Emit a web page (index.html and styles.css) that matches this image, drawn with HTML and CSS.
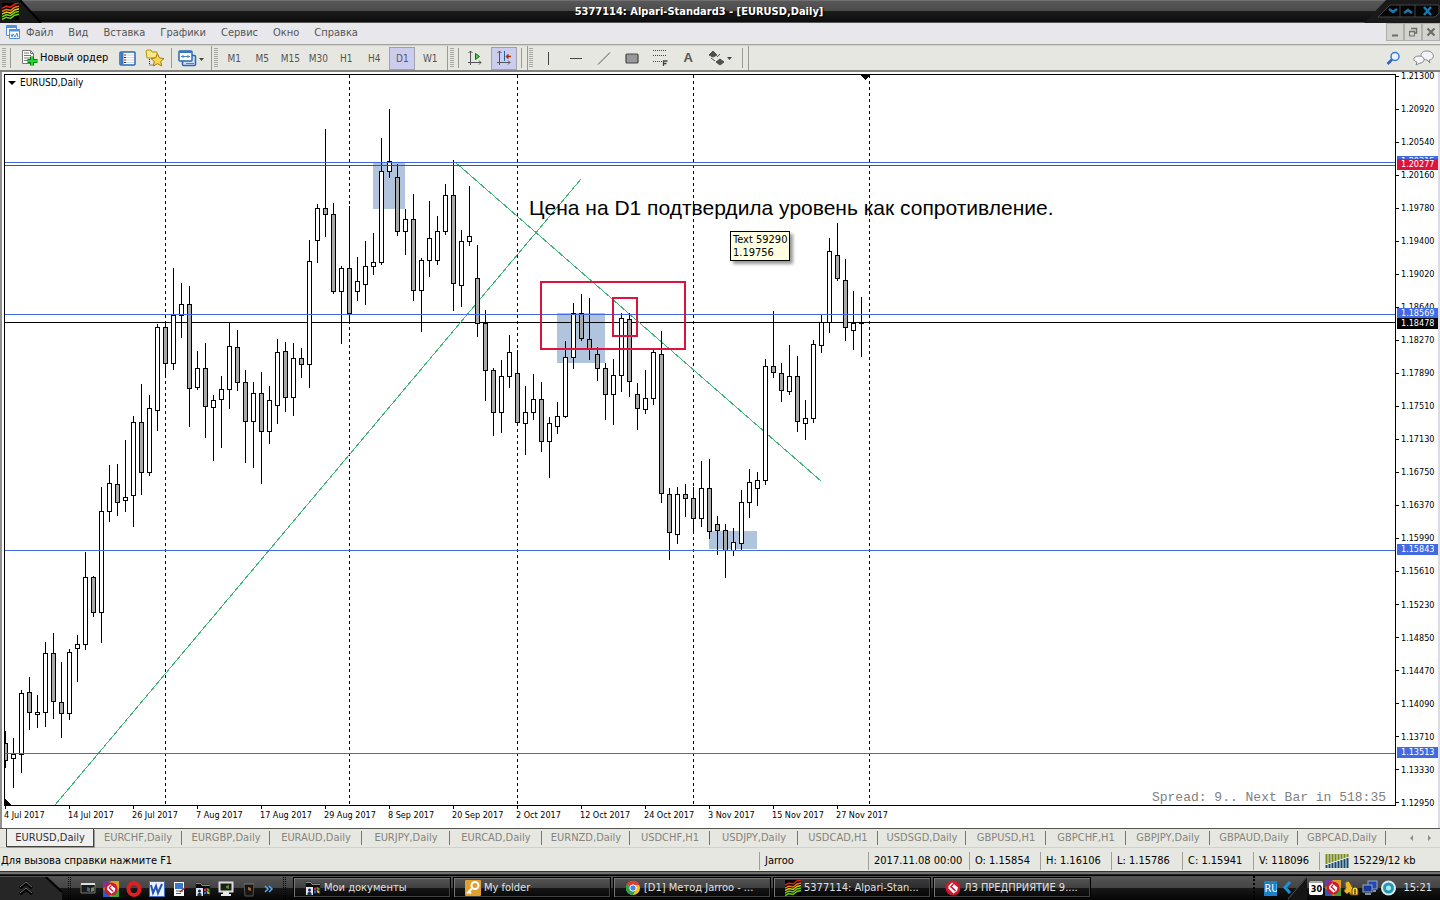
FILE: index.html
```
<!DOCTYPE html>
<html lang="ru">
<head>
<meta charset="utf-8">
<title>5377114: Alpari-Standard3 - [EURUSD,Daily]</title>
<link rel="stylesheet" href="styles.css">
</head>
<body>
<svg class="defs" aria-hidden="true">
  <defs>
    <symbol id="alpari" viewBox="0 0 16 16"><rect width="16" height="16" fill="#000"/><g fill="none" stroke-width="1.5"><path stroke="#e02010" d="M0 5l4-2 4 1 4-3 4-1"/><path stroke="#e87818" d="M0 8l4-2 4 1 4-3 4-1"/><path stroke="#d8c820" d="M0 10.500l4-2 4 1 4-3 4-1"/><path stroke="#70d010" d="M0 13l4-2 4 1 4-3 4-1M0 15.500l4-2 4 1 4-3 4-1"/></g></symbol>
    <symbol id="folderpc" viewBox="0 0 16 16"><path d="M1 2h5l1 2h8v10H1z" fill="#0c0c0c" stroke="#222" stroke-width=".7"/><path d="M1 2.500h5l1 2h8" fill="none" stroke="#888"/><rect x="1" y="7" width="7" height="8" fill="#dde6f4"/><path d="M2.500 15v-2l2-1.500 2 1.500v2z" fill="#234"/><circle cx="4.500" cy="10" r="1.500" fill="#223"/><path d="M9 8l2.500-1v2.500L9 10.500z" fill="#d33"/><path d="M12 7l2.500 1v2.500L12 9.500z" fill="#4a3"/><path d="M9 11l2.500-1v2.500L9 13.500z" fill="#36c"/><path d="M12 10l2.500 1v2.500L12 12.500z" fill="#db2"/></symbol>
    <symbol id="sred" viewBox="0 0 16 16"><circle cx="8" cy="8" r="7.500" fill="#d01830"/><path d="M3.500 6l3.500-3.500 6 5-1 3.500-3.500 2.500-5-5z" fill="#fff"/><path d="M5.500 6.500l5 4.500M8.500 4L6 6.500l4.500 4.200" stroke="#d01830" stroke-width="1.300" fill="none"/></symbol>
    <symbol id="ssq" viewBox="0 0 16 16"><rect width="16" height="16" fill="#d8a020"/><path d="M0 0h8L0 8z" fill="#7038a0"/><path d="M16 16H8l8-8z" fill="#40a030"/><path d="M0 16v-8l8 8z" fill="#2860c0"/><use href="#sred" x="1" y="1" width="14" height="14"/></symbol>
  </defs>
</svg>

<header class="titlebar">
  <svg class="title-left" width="44" height="23" viewBox="0 0 44 23"><path d="M0 0h20l21 23H0z" fill="#191919"/><path d="M20 0l21 23" stroke="#000" stroke-width="2"/><use href="#alpari" x="2" y="3" width="17" height="17"/></svg>
  <h1>5377114: Alpari-Standard3 - [EURUSD,Daily]</h1>
  <svg class="title-right" width="76" height="23" viewBox="0 0 76 23"><path d="M0 23L22 0h54v23z" fill="#1a1a1a"/><path d="M14 17l12-12h49v8l-4 4H14z" fill="#050505" stroke="#444"/><path d="M36 5v12M51 5v12" stroke="#444"/><g fill="none" stroke="#1878b0" stroke-width="2.500"><path d="M25 9l4 3 4-3M40 13l4-3 4 3M60 7l7 8M67 7l-7 8"/></g></svg>
</header>

<nav class="menubar">
  <svg class="menu-icon" width="16" height="15" viewBox="0 0 16 15"><g fill="#fff" stroke="#5090e0"><path d="M1.500 .500h10v10h-10z"/><path d="M1 2h11" stroke-width="2"/><path d="M4.500 4.500h10v9h-10z"/><path d="M4 5.500h11" stroke-width="2"/><path d="M6 9l1 3 1-3 2 3 2-4 1 4" fill="none"/></g></svg>
  <button>Файл</button><button>Вид</button><button>Вставка</button><button>Графики</button><button>Сервис</button><button>Окно</button><button>Справка</button>
  <div class="mdi">
    <button aria-label="Свернуть"><svg width="10" height="10"><path d="M2 8.500h6" stroke="#6e6e66" stroke-width="2"/></svg></button>
    <button aria-label="Восстановить"><svg width="10" height="10"><path d="M3 1.500h6M8.500 1v5H7M1 4.500h6" stroke="#6e6e66" stroke-width="1.500" fill="none"/><path d="M1.500 4v5h5V4" stroke="#6e6e66" fill="none"/></svg></button>
    <button aria-label="Закрыть"><svg width="10" height="10"><path d="M1.500 1.500l7 7M8.500 1.500l-7 7" stroke="#6e6e66" stroke-width="2.200"/></svg></button>
  </div>
</nav>

<div class="toolbar" role="toolbar">
  <div class="tgroup">
    <i class="grip"></i><i class="vline"></i>
    <button class="order"><svg width="17" height="18" viewBox="0 0 17 18"><path d="M1.500 1.500h8l3 3v10h-11z" fill="#fff" stroke="#777"/><path d="M9.500 1.500v3h3" fill="none" stroke="#777"/><path d="M3 4h5M3 6.500h7M3 9h7M3 11.500h4" stroke="#777"/><path d="M11 7.500v9M6.500 12h10" stroke="#087a10" stroke-width="4"/><path d="M11 8v8M7 12h9" stroke="#20d830" stroke-width="2"/></svg>Новый ордер</button>
    <button class="icon" aria-label="Обзор рынка"><svg width="17" height="15"><rect x="1" y="1" width="15" height="13" rx="1" fill="#fff" stroke="#2868b0" stroke-width="1.500"/><path d="M3 1.500v12" stroke="#3878c0" stroke-width="3"/><path d="M6 4h9M6 6.500h9M6 9h9M6 11.500h9" stroke="#c8d4e8"/><path d="M5 4h2M5 9h2" stroke="#c22"/><path d="M5 6.500h2M5 11.500h2" stroke="#234"/></svg></button>
    <button class="icon" aria-label="Навигатор"><svg width="20" height="18"><path d="M1 2l1-1h4l1 2h5v6H2z" fill="#f8e888" stroke="#b89010"/><path d="M4.500 10v6h4" fill="none" stroke="#222" stroke-dasharray="1 1"/><path d="M12.500 5l2 4 4.500.500-3.300 3 1 4.500-4.200-2.300L8.300 17l1-4.500L6 9.500l4.500-.500z" fill="#f8d850" stroke="#a87810"/></svg></button>
    <i class="vline"></i>
    <button class="icon wide" aria-label="Профили"><svg width="26" height="17"><rect x="4.500" y="5.500" width="13" height="10" rx="1" fill="#cfe0f4" stroke="#2868b0" stroke-width="1.500"/><rect x="1" y="1" width="13" height="10" rx="1" fill="#fff" stroke="#2868b0" stroke-width="1.500"/><path d="M1 2h13" stroke="#3878c0" stroke-width="2"/><path d="M3 6.500h9M5 5v3M10 5v3M8 13.500h8" stroke="#4888b8"/><path d="M21 8h5l-2.500 3z" fill="#444"/></svg></button>
  </div>
  <div class="tgroup tf">
    <i class="grip"></i>
    <button>M1</button><button>M5</button><button>M15</button><button>M30</button><button>H1</button><button>H4</button><button class="on">D1</button><button>W1</button>
  </div>
  <div class="tgroup">
    <i class="grip"></i><i class="vline"></i>
    <button class="icon" aria-label="Автопрокрутка"><svg width="16" height="16"><path d="M3.500 1v14M1 12.500h13M1.500 3l2-2 2 2M12 10.500l2 2-2 2" fill="none" stroke="#555"/><path d="M8.500 3.500l4 3-4 3z" fill="#50d050" stroke="#087018"/></svg></button>
    <button class="icon on" aria-label="Сдвиг графика"><svg width="16" height="16"><path d="M3.500 1v14M1 12.500h13M1.500 3l2-2 2 2M12 10.500l2 2-2 2" fill="none" stroke="#555"/><path d="M8.500 1v10" stroke="#1868a8"/><path d="M15 6.500h-4M12.500 4.500l-2 2 2 2" stroke="#b03010" stroke-width="1.500" fill="none"/></svg></button>
    <i class="vline"></i>
  </div>
  <div class="tgroup draw">
    <i class="grip"></i>
    <button class="icon" aria-label="Вертикальная линия"><svg width="16" height="16"><path d="M8.500 2v13" stroke="#444"/></svg></button>
    <button class="icon" aria-label="Горизонтальная линия"><svg width="16" height="16"><path d="M2 8.500h12" stroke="#444"/></svg></button>
    <button class="icon" aria-label="Трендовая линия"><svg width="16" height="16"><path d="M2 14.500L14 2.500" stroke="#555"/></svg></button>
    <button class="icon" aria-label="Прямоугольник"><svg width="16" height="16"><rect x="2" y="4" width="12" height="9" rx="1" fill="#999" stroke="#444" stroke-width="1.200"/></svg></button>
    <button class="icon" aria-label="Фибоначчи"><svg width="16" height="18"><path d="M1 1.500h14M1 6.500h14M1 12.500h9" stroke="#444" stroke-dasharray="1 1"/><path d="M11.500 17v-5h4M11.500 14.500h3" fill="none" stroke="#444" stroke-width="1.300"/></svg></button>
    <button class="icon letter" aria-label="Текст">A</button>
    <button class="icon wide" aria-label="Стрелки"><svg width="26" height="16"><path d="M5 1l4 4-4 2-4-2zM12 15l-4-3 4-3 4 3zM3 8l4 3M9 7l3-3" fill="#505050" stroke="#505050"/><path d="M19 7h5l-2.500 3z" fill="#444"/></svg></button>
    <i class="vline"></i>
  </div>
  <div class="tright">
    <button class="icon" aria-label="Поиск"><svg width="15" height="15"><circle cx="9" cy="5.500" r="4" fill="#eef4ff" stroke="#3878d8" stroke-width="1.500"/><path d="M6 8.500L1.500 13" stroke="#2860d0" stroke-width="2.500"/></svg></button>
    <button class="icon" aria-label="Чат"><svg width="22" height="16"><path d="M14 1c8 0 8 9 2 9l1 3-3-3C6 9 6 1 14 1z" fill="#f4f4f8" stroke="#888"/><path d="M6 6c7 0 6 7 1 7l-4 2 1-3C-1 11 0 6 6 6z" fill="#f8f8fc" stroke="#888"/></svg></button>
  </div>
</div>

<main class="chart">
  <section class="plot">
    <svg class="plot-svg" width="100%" height="100%" role="img" aria-label="EURUSD,Daily">
      <g transform="translate(-5 -75)" shape-rendering="crispEdges">
        <g fill="#b0c4de"><rect x="373" y="162" width="32" height="47"/><rect x="557" y="313" width="48" height="50"/><rect x="709" y="531" width="48" height="18"/></g>
        <path class="period" d="M165.500 75v730M349.500 75v730M517.500 75v730M693.500 75v730M869.500 75v730"/>
        <path d="M5 322.500h3000" stroke="#000"/>
        <path d="M55 805L581 179M455 162L821 481" stroke="#3cb371" fill="none"/>
        <g id="candles"></g>
        <path d="M5 162.500h3000M5 314.500h3000M5 550.500h3000M5 753.500h3000" stroke="#4169e1"/>
        <path d="M5 165.500h3000" stroke="#dc143c"/>
        <g fill="none" stroke="#dc143c" stroke-width="2"><rect x="541" y="282" width="144" height="67"/><rect x="613" y="298" width="24" height="38"/></g>
        <path d="M861 75h9l-4 5h-1zM5 799v6h6z"/>
      </g>
      <text class="note" x="524" y="140">Цена на D1 подтвердила уровень как сопротивление.</text>
    </svg>
    <p class="symbol"><svg width="8" height="5"><path d="M0 0h8L4 4z"/></svg>EURUSD,Daily</p>
    <div class="tip">Text 59290<br>1.19756</div>
    <p class="spread">Spread: 9.. Next Bar in 518:35</p>
  </section>
  <aside class="prices">
    <span>1.21300</span><span>1.20920</span><span>1.20540</span><span>1.20160</span><span>1.19780</span><span>1.19400</span><span>1.19020</span><span>1.18640</span><span>1.18270</span><span>1.17890</span><span>1.17510</span><span>1.17130</span><span>1.16750</span><span>1.16370</span><span>1.15990</span><span>1.15610</span><span>1.15230</span><span>1.14850</span><span>1.14470</span><span>1.14090</span><span>1.13710</span><span>1.13330</span><span>1.12950</span>
    <b class="lv l1">1.20315</b><b class="lv l2">1.20277</b><b class="lv l3">1.18569</b><b class="lv l4">1.18478</b><b class="lv l5">1.15843</b><b class="lv l6">1.13513</b>
  </aside>
  <div class="dates">
    <span>4 Jul 2017</span><span>14 Jul 2017</span><span>26 Jul 2017</span><span>7 Aug 2017</span><span>17 Aug 2017</span><span>29 Aug 2017</span><span>8 Sep 2017</span><span>20 Sep 2017</span><span>2 Oct 2017</span><span>12 Oct 2017</span><span>24 Oct 2017</span><span>3 Nov 2017</span><span>15 Nov 2017</span><span>27 Nov 2017</span>
  </div>
</main>

<nav class="tabs">
  <button class="on">EURUSD,Daily</button><button>EURCHF,Daily</button><button>EURGBP,Daily</button><button class="w92">EURAUD,Daily</button><button>EURJPY,Daily</button><button class="w92">EURCAD,Daily</button><button>EURNZD,Daily</button><button class="w80">USDCHF,H1</button><button>USDJPY,Daily</button><button class="w80">USDCAD,H1</button><button>USDSGD,Daily</button><button class="w80">GBPUSD,H1</button><button class="w80">GBPCHF,H1</button><button class="w84">GBPJPY,Daily</button><button>GBPAUD,Daily</button><button>GBPCAD,Daily</button>
  <span class="arrows"><svg width="24" height="8"><path d="M5 1v6L2 4zM20 1v6l3-3z" fill="#8c8c88"/></svg></span>
</nav>

<footer class="status">
  <span class="help">Для вызова справки нажмите F1</span>
  <span class="s1">Jarroo</span><span class="s2">2017.11.08 00:00</span><span class="s3">O: 1.15854</span><span class="s3">H: 1.16106</span><span class="s3">L: 1.15786</span><span class="s3">C: 1.15941</span><span class="s4">V: 118096</span>
  <span class="s5"><svg width="24" height="14"><path d="M1.500 0v10M4.500 0v9M7.500 0v8M10.500 0v7M13.500 0v6M16.500 0v5M19.500 0v4M22.500 0v3" stroke="#78881c" stroke-width="2"/><path d="M1.500 11v3M4.500 10v4M7.500 9v5M10.500 8v6M13.500 7v7M16.500 6v8M19.500 5v9M22.500 4v10" stroke="#144a70" stroke-width="2"/></svg>15229/12 kb</span>
</footer>

<div class="taskbar">
  <button class="start" aria-label="Пуск"><svg width="63" height="23"><path d="M0 0h46l16 15v8H0z" fill="#262626"/><path d="M46 0l16 15" stroke="#000" stroke-width="2"/><path d="M20 11l6-5 6 5M20 17l6-5 6 5" fill="none" stroke="#000" stroke-width="3"/><path d="M20 10l6-5 6 5M20 16l6-5 6 5" fill="none" stroke="#777"/></svg></button>
  <i class="dots"></i>
  <div class="quick">
    <button aria-label="Рабочий стол"><svg width="16" height="16"><path d="M1 3h14v9H1z" fill="#1a1a1a" stroke="#777"/><path d="M1 3h14" stroke="#ddd" stroke-width="2"/><path d="M7 6l3 1v4l-3-1z" fill="#468"/><path d="M11 7l3-1v4l-3 1z" fill="#785"/></svg></button>
    <button aria-label="Приложение"><svg width="16" height="16"><use href="#ssq"/></svg></button>
    <button aria-label="Opera"><svg width="16" height="16"><ellipse cx="8" cy="8" rx="5.500" ry="6" fill="none" stroke="#e02020" stroke-width="4"/></svg></button>
    <button aria-label="Word"><svg width="16" height="16"><path d="M.500 .500h15v15H.500z" fill="#e8f0fc" stroke="#4070c0"/><path d="M2 4l2 8 3-7 2 7 4-9" fill="none" stroke="#2454b0" stroke-width="2"/></svg></button>
    <button aria-label="Рисунок"><svg width="16" height="16"><path d="M2 1h10v14H2z" fill="#fff"/><path d="M3 2h8v6H3z" fill="#3878c8"/><path d="M4 10h7M4 12.500h5" stroke="#557"/><path d="M15 5l-7 6" stroke="#b02020" stroke-width="1.500"/></svg></button>
    <button aria-label="Мои документы"><svg width="16" height="16"><use href="#folderpc"/></svg></button>
    <button aria-label="Компьютер"><svg width="16" height="16"><rect x="1.500" y="1.500" width="13" height="9" fill="#182018" stroke="#ddd" stroke-width="2"/><path d="M5 11h6v2h2v2H3v-2h2z" fill="#e8e8e8"/><path d="M8 5l3-1v4l-3-1z" fill="#5a8c30"/></svg></button>
    <button aria-label="Корзина"><svg width="16" height="16"><path d="M3 2h10l-1 13H4z" fill="#151515" stroke="#555"/><path d="M3 3h10" stroke="#888"/><path d="M7 6l3 1v3l-3-1z" fill="#a63"/></svg></button>
    <button class="more" aria-label="Ещё"><svg width="10" height="8"><path d="M1 1l3 3-3 3M5 1l3 3-3 3" fill="none" stroke="#50a8f0" stroke-width="1.500"/></svg></button>
  </div>
  <i class="dots"></i>
  <div class="tasks">
    <button><svg width="16" height="16"><use href="#folderpc"/></svg>Мои документы</button>
    <button><svg width="16" height="16"><rect width="16" height="16" rx="1" fill="#e0a030"/><circle cx="10" cy="5.500" r="3.500" fill="none" stroke="#fff" stroke-width="2"/><path d="M7.500 8L2 13.500M4 11.500l2 2" stroke="#fff" stroke-width="2"/></svg>My folder</button>
    <button><svg width="16" height="16"><circle cx="8" cy="8" r="7" fill="#fbc116"/><path d="M8 8L1.900 4.500A7 7 0 0 1 14.500 5H8z" fill="#e33b2e"/><path d="M8 8L1.900 4.500A7 7 0 0 0 8 15l3-5.500z" fill="#2ba24c"/><circle cx="8" cy="8" r="3.200" fill="#4285f4" stroke="#fff"/></svg>[D1] Метод Jarroo - ...</button>
    <button class="on"><svg width="16" height="16"><use href="#alpari"/></svg>5377114: Alpari-Stan...</button>
    <button><svg width="16" height="16"><use href="#sred"/></svg>ЛЗ ПРЕДПРИЯТИЕ 9....</button>
  </div>
  <div class="tray">
    <span class="lang">RU</span>
    <svg width="28" height="24"><path d="M28 0L8 24h20z" fill="#151515"/><path d="M28 1L9 23" stroke="#555"/><path d="M11 6L6 11.500l5 5.500" fill="none" stroke="#1c90d8" stroke-width="3"/></svg>
    <span class="cal">30</span>
    <svg width="16" height="16"><use href="#ssq"/></svg>
    <svg width="17" height="16"><path d="M2 3l3-2 2 2 2 4 3 2v4l-4 2-2-3-2 2-3-3 2-3z" fill="#e8b828" stroke="#8c6408"/><path d="M9 15V10a3 3 0 0 1 6 0v5z" fill="#f8d040" stroke="#604000"/><path d="M12 9v5" stroke="#000"/></svg>
    <svg width="16" height="16"><rect x="6" y="1" width="9" height="8" fill="#2048b8" stroke="#9ab"/><rect x="1" y="5" width="9" height="7" fill="#1838a0" stroke="#9ab"/><path d="M3 14h6M11 11h3" stroke="#abc" stroke-width="1.500"/></svg>
    <svg width="17" height="16"><circle cx="8.500" cy="8" r="7.500" fill="#d8ecf0"/><circle cx="8.500" cy="8" r="5.500" fill="#2898b0"/><circle cx="8.500" cy="8" r="2.500" fill="#a8e8f4"/></svg>
    <time>15:21</time>
  </div>
</div>
<script src="chart.js"></script>
</body>
</html>
```
FILE: styles.css
```
* { box-sizing: border-box; }
html, body { height: 100%; margin: 0; }
body {
  display: flex; flex-direction: column; overflow: hidden;
  background: #e6e7e1; color: #000;
  font: 11px/14px "DejaVu Sans Condensed", "DejaVu Sans", sans-serif;
}
p, h1 { margin: 0; }
svg { display: block; flex: none; }
button { font: inherit; color: inherit; background: none; border: 0; padding: 0; margin: 0; white-space: nowrap; }
.defs { position: absolute; width: 0; height: 0; }

.titlebar {
  display: flex; justify-content: space-between; align-items: center; flex: none; height: 23px;
  background: linear-gradient(#707070 0 1px, #585858 1px, #4a4a4a 11px, #1c1c1c 11px, #0c0c0c 22px, #555 22px);
}
.titlebar h1 { color: #fff; font-size: 11px; font-weight: bold; line-height: 14px; text-shadow: 1px 1px 1px #000; padding: 1px 10px 0 0; }

.menubar { display: flex; align-items: center; flex: none; height: 22px; padding-left: 5px; background: #e8e8ec; border-bottom: 1px solid #a4a49e; color: #555; }
.menubar > button { padding: 0 8px 1px 7px; }
.menubar > .menu-icon { margin: 0 -2px 2px 0; }
.mdi { display: flex; margin-left: auto; align-self: flex-start; }
.mdi button { display: grid; place-items: center; width: 18px; height: 18px; border: 1px solid #b0b0aa; background: #d2d2ce; }

.toolbar { display: flex; flex: none; height: 27px; border-top: 1px solid #ccccee; border-bottom: 2px solid #80807c; color: #555; font-size: 10px; }
.tgroup { display: flex; align-items: center; padding: 0 3px 0 2px; border-right: 1px solid #999994; }
.grip { width: 4px; height: 20px; margin-right: 2px; background: repeating-linear-gradient(#a8a8a2 0 1px, transparent 1px 2px); }
.vline { width: 1px; height: 20px; margin: 0 2px; background: #999994; }
.icon { display: grid; place-items: center; width: 28px; height: 23px; }
.icon.wide { width: 34px; }
.draw { padding-left: 1px; }
.draw .grip { margin-right: 1px; }
.draw .icon.wide { width: 38px; }
.icon.on { width: 26px; margin: 0 2px 0 2px; }
.on { background: #ccccee; border: 1px solid #a0a0b0; }
.order { display: flex; align-items: center; gap: 2px; padding: 0 5px 0 8px; color: #000; font-size: 11px; }
.tf button { width: 28px; height: 23px; padding-top: 2px; }
.tf .on { width: 26px; margin: 0 1px; }
.letter { font: bold 13px/16px "Liberation Sans", sans-serif; }
.tright { display: flex; align-items: center; gap: 3px; margin-left: auto; padding-right: 2px; }

.chart {
  display: grid; grid-template: minmax(0, 1fr) 22px / minmax(0, 1fr) 42px; flex: 1; min-height: 0;
  padding: 2px 0 0 2px;
  background: #fff; border-left: 2px solid #91918d; border-right: 2px solid #dcdce8;
  font-size: 9px; line-height: 12px;
}
.plot { position: relative; border: 1px solid #000; overflow: hidden; }
.period { stroke: #000; stroke-dasharray: 3 3; }
.note { font: 21px "Liberation Sans", sans-serif; }
.symbol { position: absolute; left: 3px; top: 2px; display: flex; align-items: center; gap: 4px; font-size: 10px; line-height: 12px; }
.tip { position: absolute; left: 725px; top: 156px; padding: 1px 2px; border: 1px solid #000; background: #ffffe1; box-shadow: 3px 3px 3px #0006; font-size: 11px; line-height: 13px; }
.spread { position: absolute; right: 9px; bottom: 0; color: #808080; font: 13px/15px "Liberation Mono", monospace; white-space: pre; }
.prices { position: relative; display: flex; flex-direction: column; justify-content: space-between; margin: -4px 0 -3px; }
.prices span { display: flex; align-items: center; gap: 2px; height: 12px; }
.prices span::before { content: ""; width: 3px; height: 1px; background: #000; }
.lv { position: absolute; left: 1px; right: 0; height: 11px; padding-left: 4px; line-height: 11px; font-weight: normal; color: #fff; background: #4169e1; }
.l1 { top: 86px; }
.l2 { top: 89px; background: #dc143c; }
.l3 { top: 238px; }
.l4 { top: 248px; background: #000; }
.l5 { top: 474px; }
.l6 { top: 677px; }
.dates { grid-column: 1 / -1; display: grid; grid-auto-flow: column; grid-auto-columns: 64px; justify-content: start; }
.dates span { position: relative; padding-top: 3px; white-space: nowrap; }
.dates span::before { content: ""; position: absolute; left: 1px; top: 0; width: 1px; height: 3px; background: #000; }

.tabs { display: flex; flex: none; height: 20px; padding-left: 6px; border-top: 1px solid #55554f; border-bottom: 1px solid #ccccee; color: #84847c; align-items: flex-start; }
.tabs button { position: relative; width: 88px; height: 18px; }
.tabs button:not(.on)::after { content: ""; position: absolute; right: 0; top: 2px; width: 1px; height: 14px; background: #77776f; }
.tabs .w80 { width: 80px; }
.tabs .w84 { width: 84px; }
.tabs .w92 { width: 92px; }
.tabs .on { background: #f0f0f0; border: 1px solid #44443f; border-top: 0; box-shadow: 1px 1px #999; color: #333; }
.arrows { margin: 5px 8px 0 auto; }

.status { display: flex; flex: none; height: 23px; padding-top: 3px; align-items: center; }
.status span { display: flex; align-items: center; gap: 4px; height: 18px; padding-left: 5px; border-left: 1px solid #a0a09a; white-space: nowrap; }
.status .help { flex: 1; padding-left: 1px; border-left: 0; }
.status .s1 { width: 109px; }
.status .s2 { width: 101px; }
.status .s3 { width: 71px; }
.status .s4 { width: 66px; }
.status .s5 { width: 121px; }

.taskbar {
  display: flex; align-items: flex-end; flex: none; height: 29px; color: #e0e0e0;
  background: linear-gradient(#333 0 1px, #707070 1px 3px, #4a4a4a 3px, #000 4px 5px, #555 5px, #444 17px, #181818 17px, #050505);
}
.start { width: 63px; }
.dots { width: 3px; height: 23px; margin: 0 3px 0 5px; border: 1px dotted #000; border-width: 0 1px; }
.quick { display: flex; align-items: center; height: 23px; padding-left: 2px; }
.quick button { display: grid; place-items: center; width: 23px; height: 20px; }
.quick .more { width: 18px; }
.tasks { display: flex; flex: 1; gap: 2px; height: 23px; padding-left: 4px; min-width: 0; }
.tasks button {
  display: flex; align-items: center; gap: 3px; width: 158px; height: 21px; padding-left: 11px;
  border: 1px solid #000; box-shadow: inset 1px 1px #777, inset -1px -1px #444;
  background: linear-gradient(#555, #404040 10px, #161616 10px, #080808);
}
.tasks .on { background: linear-gradient(#3c3c3c, #2c2c2c 10px, #101010 10px, #080808); }
.tray { display: flex; align-items: center; gap: 2px; height: 24px; padding: 0 8px 0 9px; border-left: 2px dotted #000; }
.lang { width: 13px; background: #1c80c8; color: #fff; overflow: hidden; line-height: 15px; }
.cal { width: 14px; height: 14px; border-radius: 2px; background: #fff; color: #000; font-size: 9px; font-weight: bold; text-align: center; border-top: 2px solid #aaa; line-height: 12px; }
.tray time { padding-left: 4px; }
```
FILE: chart.js
```
// One row per bar: high, body top, body bottom, low (pixels), bearish flag.
const bars = [
  [731,743,761,768,1],[738,754,759,788,0],[690,693,755,773,0],[677,692,713,730,1],[695,712,715,728,0],
  [642,653,713,727,0],[633,653,702,719,1],[662,702,714,738,1],[649,652,714,720,0],[635,644,649,682,0],
  [552,577,645,650,0],[576,577,613,617,1],[487,511,613,643,0],[465,483,512,522,0],[464,484,503,516,1],
  [440,497,501,512,0],[416,422,496,527,0],[384,422,473,495,1],[395,408,473,476,0],[324,327,411,431,0],
  [324,327,364,377,1],[268,315,364,370,0],[283,304,316,338,0],[286,304,389,427,1],[351,368,388,390,0],
  [343,368,407,438,1],[395,400,408,461,0],[376,389,400,448,0],[323,346,390,409,0],[330,347,383,391,1],
  [370,382,422,463,1],[382,393,422,468,0],[372,393,432,484,1],[386,400,432,444,0],[339,352,406,424,0],
  [342,351,398,412,1],[343,358,398,416,0],[348,358,365,378,1],[240,261,365,388,0],[204,208,241,263,0],
  [129,208,215,237,1],[203,214,292,294,1],[266,268,292,344,0],[206,268,314,322,1],[257,281,292,301,0],
  [241,266,285,305,0],[233,262,267,275,0],[138,171,263,265,0],[109,161,172,178,0],[164,177,232,236,1],
  [209,219,232,255,0],[194,219,291,301,1],[258,260,291,332,0],[201,238,261,277,0],[216,231,261,265,0],
  [184,195,232,235,0],[160,195,284,311,1],[230,241,286,307,0],[186,236,242,246,0],[245,278,324,337,1],
  [310,323,371,401,1],[368,370,413,436,1],[360,376,413,433,0],[335,352,377,388,0],[350,373,423,425,1],
  [386,412,424,455,0],[374,399,413,420,0],[382,399,442,452,1],[417,423,442,478,0],[402,416,427,434,0],
  [341,357,417,418,0],[303,313,358,369,0],[294,313,339,341,1],[298,339,349,360,1],[347,354,369,381,1],
  [363,368,395,420,1],[359,375,395,425,0],[313,318,376,392,0],[313,319,382,397,1],[383,394,409,430,1],
  [370,398,410,414,0],[349,352,399,405,0],[331,354,494,503,1],[488,494,533,560,1],[487,494,535,544,0],
  [484,494,499,517,1],[487,498,519,533,1],[461,488,519,527,0],[459,488,532,539,1],[516,524,531,555,1],
  [524,530,551,578,1],[528,542,551,556,0],[490,502,544,550,0],[469,482,503,518,0],[472,480,489,506,0],
  [359,366,481,485,0],[311,366,373,378,1],[363,373,391,402,1],[345,376,392,395,0],[356,376,422,432,1],
  [400,418,424,440,0],[340,344,419,423,0],[315,322,346,353,0],[238,251,323,333,0],[223,255,279,281,1],
  [259,280,328,341,1],[291,323,331,350,0],[297,323,324,357,0]
];
const ns = "http://www.w3.org/2000/svg";
const layer = document.getElementById("candles");
function rect(x, y, w, h, fill) {
  const r = document.createElementNS(ns, "rect");
  r.setAttribute("x", x);
  r.setAttribute("y", y);
  r.setAttribute("width", w);
  r.setAttribute("height", h);
  r.setAttribute("fill", fill);
  layer.appendChild(r);
}
bars.forEach(([high, top, bottom, low, bear], i) => {
  const x = 5 + 8 * i;
  rect(x, high, 1, low - high, "#000");
  rect(x - 2, top, 5, bottom - top, "#000");
  if (bottom - top > 2) rect(x - 1, top + 1, 3, bottom - top - 2, bear ? "#a9a9a9" : "#fff");
});
```
